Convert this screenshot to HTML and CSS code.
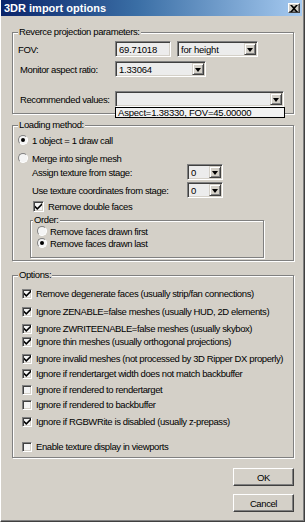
FILE: index.html
```html
<!DOCTYPE html>
<html lang="en">
<head>
    <meta charset="UTF-8">
    <title>3DR import options</title>
    <link rel="stylesheet" href="styles.css">
</head>
<body>
    <div class="window">
        <div class="titlebar">
            <span class="title">3DR import options</span>
            <span class="close">
                <svg width="8" height="7" viewBox="0 0 8 7"><path d="M0 0h2l2 2 2-2h2L5 3.5 8 7H6L4 5 2 7H0l3-3.5z"/></svg>
            </span>
        </div>
        <div class="client">
            <!--parametros de proyeccion-->
            <fieldset class="group proj">
                <legend>Reverce projection parameters:</legend>
                <div class="field-row">
                    <span class="lbl">FOV:</span>
                    <span class="edit fov-edit">69.71018</span>
                    <span class="combo fov-mode"><span class="combo-text">for height</span><span class="drop"></span></span>
                </div>
                <div class="field-row row-aspect">
                    <span class="lbl lbl-in">Monitor aspect ratio:</span>
                    <span class="combo aspect"><span class="combo-text">1.33064</span><span class="drop"></span></span>
                </div>
                <div class="field-row row-rec">
                    <span class="lbl lbl-in">Recommended values:</span>
                    <span class="combo rec">
                        <span class="combo-text"></span><span class="drop"></span>
                        <span class="droplist">Aspect=1.38330, FOV=45.00000</span>
                    </span>
                </div>
            </fieldset>

            <!--metodo de carga-->
            <fieldset class="group loading">
                <legend>Loading method:</legend>
                <div class="opt-row"><span class="radio on"></span>1 object = 1 draw call</div>
                <div class="opt-row merge"><span class="radio"></span>Merge into single mesh</div>
                <div class="field-row stage">
                    <span class="lbl lbl-stage">Assign texture from stage:</span>
                    <span class="combo small"><span class="combo-text">0</span><span class="drop"></span></span>
                </div>
                <div class="field-row stage stage-2">
                    <span class="lbl lbl-stage">Use texture coordinates from stage:</span>
                    <span class="combo small"><span class="combo-text">0</span><span class="drop"></span></span>
                </div>
                <div class="opt-row double">
                    <span class="check on"><svg width="7" height="7" viewBox="0 0 7 7"><path d="M0 2.5l2.3 2.3L7 0v2.2L2.3 6.9 0 4.7z"/></svg></span>Remove double faces
                </div>
                <fieldset class="group order">
                    <legend>Order:</legend>
                    <div class="opt-row"><span class="radio"></span>Remove faces drawn first</div>
                    <div class="opt-row"><span class="radio on"></span>Remove faces drawn last</div>
                </fieldset>
            </fieldset>

            <!--opciones-->
            <fieldset class="group options">
                <legend>Options:</legend>
                <div class="opt-row"><span class="check on"><svg width="7" height="7" viewBox="0 0 7 7"><path d="M0 2.5l2.3 2.3L7 0v2.2L2.3 6.9 0 4.7z"/></svg></span>Remove degenerate faces (usually strip/fan connections)</div>
                <div class="opt-row mt5"><span class="check on"><svg width="7" height="7" viewBox="0 0 7 7"><path d="M0 2.5l2.3 2.3L7 0v2.2L2.3 6.9 0 4.7z"/></svg></span>Ignore ZENABLE=false meshes (usually HUD, 2D elements)</div>
                <div class="opt-row mt4"><span class="check on"><svg width="7" height="7" viewBox="0 0 7 7"><path d="M0 2.5l2.3 2.3L7 0v2.2L2.3 6.9 0 4.7z"/></svg></span>Ignore ZWRITEENABLE=false meshes (usually skybox)</div>
                <div class="opt-row mt0"><span class="check on"><svg width="7" height="7" viewBox="0 0 7 7"><path d="M0 2.5l2.3 2.3L7 0v2.2L2.3 6.9 0 4.7z"/></svg></span>Ignore thin meshes (usually orthogonal projections)</div>
                <div class="opt-row mt4"><span class="check on"><svg width="7" height="7" viewBox="0 0 7 7"><path d="M0 2.5l2.3 2.3L7 0v2.2L2.3 6.9 0 4.7z"/></svg></span>Ignore invalid meshes (not processed by 3D Ripper DX properly)</div>
                <div class="opt-row mt2"><span class="check on"><svg width="7" height="7" viewBox="0 0 7 7"><path d="M0 2.5l2.3 2.3L7 0v2.2L2.3 6.9 0 4.7z"/></svg></span>Ignore if rendertarget width does not match backbuffer</div>
                <div class="opt-row mt3"><span class="check"></span>Ignore if rendered to rendertarget</div>
                <div class="opt-row mt2"><span class="check"></span>Ignore if rendered to backbuffer</div>
                <div class="opt-row mt4"><span class="check on"><svg width="7" height="7" viewBox="0 0 7 7"><path d="M0 2.5l2.3 2.3L7 0v2.2L2.3 6.9 0 4.7z"/></svg></span>Ignore if RGBWRite is disabled (usually z-prepass)</div>
                <div class="opt-row mt12"><span class="check"></span>Enable texture display in viewports</div>
            </fieldset>

            <div class="buttons">
                <span class="btn">OK</span>
                <span class="btn">Cancel</span>
            </div>
        </div>
    </div>
</body>
</html>
```

FILE: styles.css
```css
body{
    margin: 0;
    background-color: #d4d0c8;
    font-family: "Liberation Sans", Arial, sans-serif;
    font-size: 9.5px;
    letter-spacing: -0.4px;
    color: #000;
}
/*Ventana completa*/
.window{
    width: 305px;
    height: 522px;
    box-sizing: border-box;
    border-left: 1px solid #fff;
    border-right: 1px solid #404040;
    border-bottom: 1px solid #404040;
    box-shadow: inset -1px -1px 0 #808080;
    padding-right: 2px;
    background-color: #d4d0c8;
}
.titlebar{
    height: 16px;
    display: flex;
    align-items: center;
    padding: 0 2px 0 3px;
    background: linear-gradient(to right, #0a246a, #3a6ea5 45%, #a6caf0);
}
.title{
    color: #fff;
    font-weight: bold;
    font-size: 11px;
    letter-spacing: 0;
}
.close{
    margin-left: auto;
    width: 12px;
    height: 10px;
    box-sizing: border-box;
    display: flex;
    align-items: center;
    justify-content: center;
    background-color: #d4d0c8;
    border-top: 1px solid #fff;
    border-left: 1px solid #fff;
    border-right: 1px solid #404040;
    border-bottom: 1px solid #404040;
    box-shadow: inset -1px -1px 0 #808080;
}
.client{
    padding: 0 8px 0 11px;
}
/*Cuadros de grupo*/
.group{
    margin: 0;
    padding: 0 5px;
    border: 1px solid #808080;
    box-shadow: inset 1px 1px 0 #fff, 1px 1px 0 #fff;
    min-inline-size: 0;
}
.group legend{
    padding: 0 1px;
    line-height: 10px;
    background-color: #d4d0c8;
}
.proj{
    margin-top: 11px;
    padding-top: 4px;
    padding-bottom: 6px;
}
.loading{
    margin-top: 6px;
    padding-top: 4px;
    padding-bottom: 2px;
}
.options{
    margin-top: 9px;
    padding-top: 7px;
    padding-bottom: 4px;
}
.order{
    margin: 3px 0 0 12px;
    width: 234px;
    box-sizing: border-box;
    padding: 0 6px 8px 6px;
}
.order legend{
    margin-left: -4px;
}
/*Filas con campos*/
.field-row{
    display: flex;
    align-items: center;
    height: 16px;
    white-space: nowrap;
}
.row-aspect{
    margin-top: 4px;
}
.row-rec{
    margin-top: 14px;
}
.lbl{
    width: 97px;
    box-sizing: border-box;
    flex-shrink: 0;
}
.lbl-in{
    padding-left: 2px;
}
.stage{
    padding-left: 14px;
}
.stage-2{
    margin-top: 2px;
}
.lbl-stage{
    width: 155px;
}
.edit, .combo{
    height: 16px;
    box-sizing: border-box;
    border-top: 1px solid #808080;
    border-left: 1px solid #808080;
    border-right: 1px solid #fff;
    border-bottom: 1px solid #fff;
    box-shadow: inset 1px 1px 0 #404040, inset -1px -1px 0 #d4d0c8;
    background-color: #ececec;
    display: flex;
    align-items: center;
    letter-spacing: -0.2px;
}
.edit{
    width: 56px;
    padding-left: 3px;
}
.fov-mode{
    width: 81px;
    margin-left: 6px;
}
.aspect{
    width: 91px;
}
.rec{
    width: 169px;
    position: relative;
}
.small{
    width: 36px;
}
.combo-text{
    flex: 1;
    padding-left: 3px;
}
.drop{
    width: 12px;
    height: 12px;
    margin-right: 1px;
    box-sizing: border-box;
    background-color: #d4d0c8;
    border-top: 1px solid #d4d0c8;
    border-left: 1px solid #d4d0c8;
    border-right: 1px solid #404040;
    border-bottom: 1px solid #404040;
    box-shadow: inset 1px 1px 0 #fff, inset -1px -1px 0 #808080;
    display: flex;
    align-items: center;
    justify-content: center;
}
.drop::after{
    content: "";
    border-left: 3.5px solid transparent;
    border-right: 3.5px solid transparent;
    border-top: 4px solid #000;
    margin-top: 1px;
}
/*Lista desplegada encima del grupo*/
.droplist{
    position: absolute;
    left: -1px;
    top: 15px;
    width: 170px;
    height: 11px;
    box-sizing: border-box;
    border: 1px solid #000;
    background-color: #f2f2f2;
    padding-left: 2px;
    line-height: 9px;
}
/*Opciones con radio y checkbox*/
.opt-row{
    display: flex;
    align-items: center;
    height: 12px;
    white-space: nowrap;
}
.options .opt-row{
    height: 13px;
    margin-top: 4px;
    padding-left: 4px;
}
.options .opt-row:first-of-type{
    margin-top: 0;
}
.options .mt0{ margin-top: 0; }
.options .mt2{ margin-top: 2px; }
.options .mt3{ margin-top: 3px; }
.options .mt4{ margin-top: 4px; }
.options .mt5{ margin-top: 5px; }
.options .mt12{ margin-top: 12px; }
.merge{
    margin-top: 6px;
}
.double{
    margin-top: 2px;
    padding-left: 15px;
}
.radio{
    width: 10px;
    height: 10px;
    box-sizing: border-box;
    border-radius: 50%;
    border: 1px solid;
    border-color: #808080 #fff #fff #808080;
    background-color: #f4f4f4;
    margin-right: 4px;
    display: flex;
    align-items: center;
    justify-content: center;
    flex-shrink: 0;
}
.order .radio{
    margin-right: 3px;
}
.radio.on::after{
    content: "";
    width: 4px;
    height: 4px;
    border-radius: 50%;
    background-color: #000;
}
.check{
    width: 10px;
    height: 10px;
    box-sizing: border-box;
    border-top: 1px solid #808080;
    border-left: 1px solid #808080;
    border-right: 1px solid #fff;
    border-bottom: 1px solid #fff;
    box-shadow: inset 1px 1px 0 #404040, inset -1px -1px 0 #d4d0c8;
    background-color: #f4f4f4;
    margin-right: 4px;
    display: flex;
    align-items: center;
    justify-content: center;
    flex-shrink: 0;
}
.double .check{
    width: 11px;
    height: 11px;
}
/*Botones*/
.buttons{
    display: flex;
    flex-direction: column;
    align-items: flex-end;
}
.btn{
    width: 61px;
    height: 18px;
    box-sizing: border-box;
    display: flex;
    align-items: center;
    justify-content: center;
    margin-top: 8px;
    border-top: 1px solid #fff;
    border-left: 1px solid #fff;
    border-right: 1px solid #404040;
    border-bottom: 1px solid #404040;
    box-shadow: inset -1px -1px 0 #808080;
}
.btn:first-child{
    margin-top: 10px;
}
```
